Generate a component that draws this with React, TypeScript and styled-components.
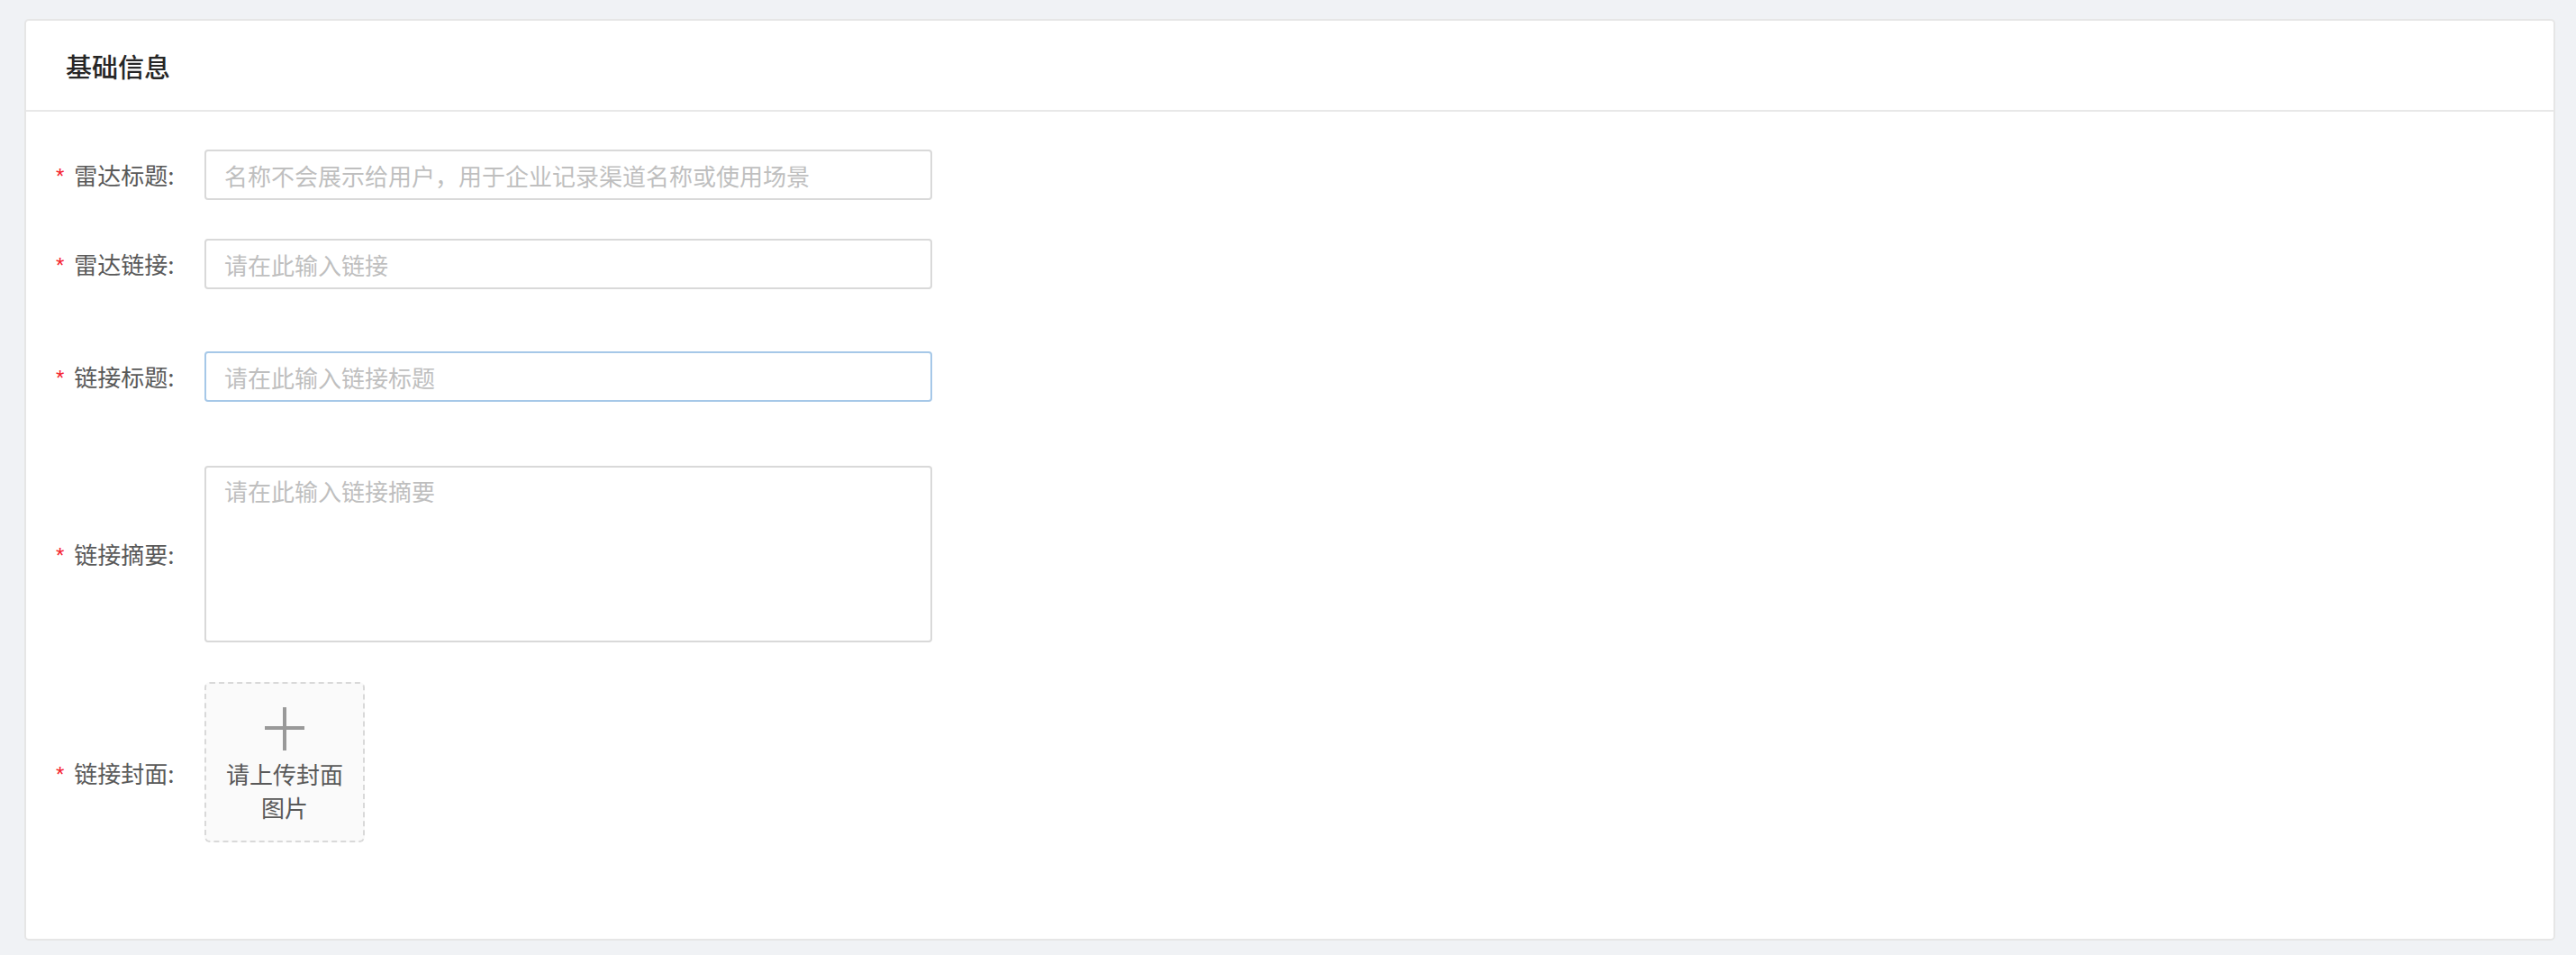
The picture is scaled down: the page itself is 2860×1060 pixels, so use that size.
import React from "react";
import styled, { createGlobalStyle } from "styled-components";

const GlobalStyle = createGlobalStyle`
  html, body {
    margin: 0;
    padding: 0;
    background: #f0f2f5;
    font-family: "Noto Sans CJK SC", "Noto Sans", "Liberation Sans", sans-serif;
  }
`;

const Page = styled.div`
  min-height: 100vh;
  box-sizing: border-box;
  padding: 21px 23px 16px 27px;
  display: flex;
  flex-direction: column;
`;

const Card = styled.section`
  flex: 1;
  background: #fff;
  border: 2px solid #e6e6e6;
  border-radius: 5px;
  display: flex;
  flex-direction: column;
`;

const CardHeader = styled.div`
  height: 99px;
  display: flex;
  align-items: center;
  padding-left: 44px;
  border-bottom: 2px solid #e8e8e8;

  h2 {
    margin: 0;
    font-size: 29px;
    font-weight: 500;
    color: #262626;
  }
`;

const CardBody = styled.div`
  padding: 42px 33px 0;
`;

const FormRow = styled.div<{ $gap?: number }>`
  display: flex;
  align-items: center;
  margin-bottom: ${(p) => p.$gap ?? 0}px;
`;

const Label = styled.label`
  width: 165px;
  flex-shrink: 0;
  display: flex;
  align-items: center;
  font-size: 26px;
  color: #595959;
  line-height: 36px;

  &::before {
    content: "*";
    color: #f5222d;
    font-family: "Liberation Sans", sans-serif;
    font-size: 24px;
    margin-right: 11px;
    position: relative;
    top: 2px;
  }
`;

const TextInput = styled.input<{ $focused?: boolean }>`
  box-sizing: border-box;
  width: 808px;
  height: 56px;
  padding: 0 20px;
  font: inherit;
  font-size: 26px;
  color: #333;
  background: #fff;
  border: 2px solid ${(p) => (p.$focused ? "#a6c8e8" : "#d9d9d9")};
  border-radius: 4px;
  outline: none;

  &::placeholder {
    color: #bfbfbf;
  }
`;

const TextArea = styled.textarea`
  box-sizing: border-box;
  width: 808px;
  height: 196px;
  padding: 7px 20px;
  font: inherit;
  font-size: 26px;
  line-height: 38px;
  color: #333;
  background: #fff;
  border: 2px solid #d9d9d9;
  border-radius: 4px;
  outline: none;
  resize: none;

  &::placeholder {
    color: #bfbfbf;
  }
`;

const UploadBox = styled.div`
  box-sizing: border-box;
  width: 178px;
  height: 178px;
  margin-bottom: 24px;
  padding: 26px 12px 0;
  background: #fafafa;
  border: 2px dashed #d9d9d9;
  border-radius: 6px;
  display: flex;
  flex-direction: column;
  align-items: center;
  cursor: pointer;

  span {
    margin-top: 7px;
    font-size: 26px;
    line-height: 37px;
    color: #595959;
    text-align: center;
  }
`;

const PlusIcon = () => (
  <svg width="44" height="48" viewBox="0 0 44 48">
    <rect x="20" y="0" width="4" height="48" fill="#999" />
    <rect x="0" y="21" width="44" height="4" fill="#999" />
  </svg>
);

export default function App() {
  return (
    <>
      <GlobalStyle />
      <Page>
        <Card>
          <CardHeader>
            <h2>基础信息</h2>
          </CardHeader>
          <CardBody>
            <FormRow $gap={43}>
              <Label>雷达标题:</Label>
              <TextInput placeholder="名称不会展示给用户，用于企业记录渠道名称或使用场景" />
            </FormRow>
            <FormRow $gap={69}>
              <Label>雷达链接:</Label>
              <TextInput placeholder="请在此输入链接" />
            </FormRow>
            <FormRow $gap={71}>
              <Label>链接标题:</Label>
              <TextInput $focused placeholder="请在此输入链接标题" />
            </FormRow>
            <FormRow $gap={44}>
              <Label>链接摘要:</Label>
              <TextArea placeholder="请在此输入链接摘要" />
            </FormRow>
            <FormRow>
              <Label>链接封面:</Label>
              <UploadBox>
                <PlusIcon />
                <span>请上传封面图片</span>
              </UploadBox>
            </FormRow>
          </CardBody>
        </Card>
      </Page>
    </>
  );
}
